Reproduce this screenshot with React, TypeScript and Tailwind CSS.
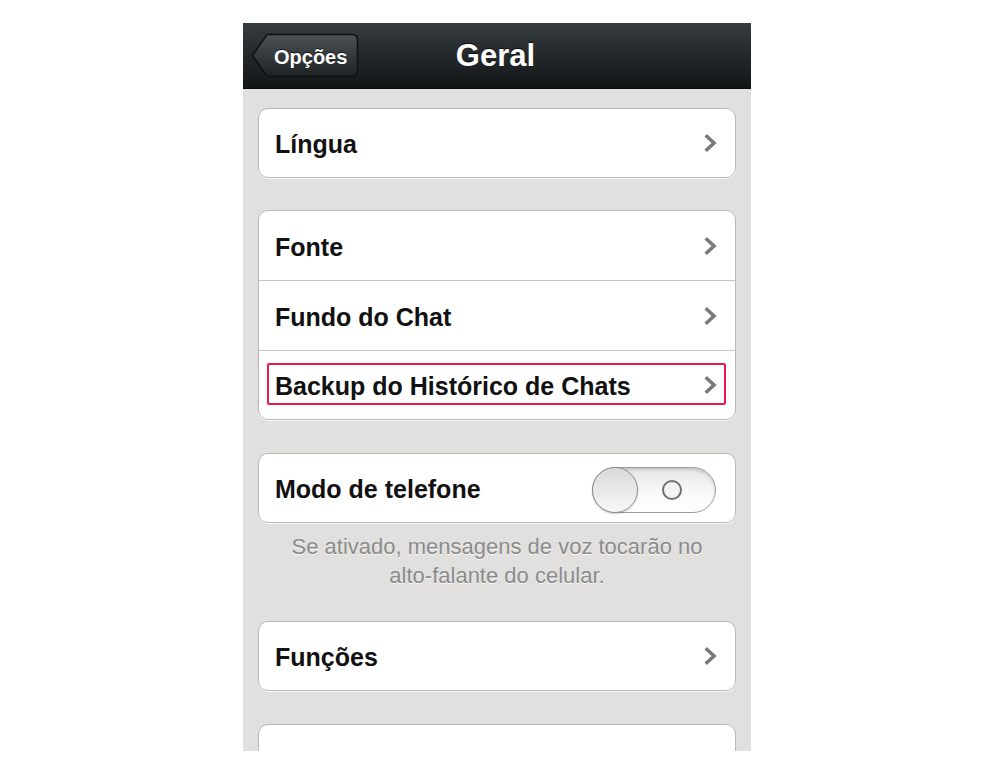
import React from 'react';

const Chevron = () => (
  <svg width="14" height="20" viewBox="0 0 14 20" className="shrink-0">
    <path d="M3 3.5 L10 10 L3 16.5" fill="none" stroke="#7a7a7a" strokeWidth="3.6" strokeLinecap="square" strokeLinejoin="miter" />
  </svg>
);

const Row: React.FC<{ label: string; last?: boolean; highlight?: boolean }> = ({ label, last, highlight }) => (
  <div className={`relative flex items-center justify-between pl-[16px] pr-[17px] ${last ? 'h-[68px]' : 'h-[70px] border-b border-[#c6c6c4]'}`}>
    <span className="pt-[4px] text-[25px] font-bold text-[#111]">{label}</span>
    <Chevron />
    {highlight && (
      <div className="absolute left-[8px] right-[9px] top-[12px] bottom-[14px] border-2 border-[#e8194b] rounded-[2px]" />
    )}
  </div>
);

const Card: React.FC<{ children?: React.ReactNode; className?: string }> = ({ children, className }) => (
  <div className={`rounded-[10px] border border-[#b9b8b5] bg-white overflow-hidden shadow-[0_1px_0_rgba(255,255,255,0.8)] ${className ?? ''}`}>
    {children}
  </div>
);

const Toggle = () => (
  <div className="relative mt-[4px] flex h-[46px] w-[124px] items-center rounded-full border border-[#9d9d9d] bg-gradient-to-b from-[#e6e6e6] via-[#f7f7f7] to-[#ffffff] shadow-[inset_0_2px_3px_rgba(0,0,0,0.15)]">
    <div className="h-[46px] w-[46px] -ml-px rounded-full border border-[#8e8e8e] bg-gradient-to-b from-[#d9d9d9] to-[#f8f8f8] shadow-[0_1px_2px_rgba(0,0,0,0.2)]" />
    <div className="ml-[24px] h-[20px] w-[20px] rounded-full border-[2.5px] border-[#6f6f6f] bg-[#f4f4f4]" />
  </div>
);

export default function App() {
  return (
    <div className="min-h-[762px] w-full bg-white font-['Liberation_Sans',Arial,sans-serif]">
      <div className="pt-[23px] pl-[243px]">
        <div className="flex h-[728px] w-[508px] flex-col overflow-hidden bg-[#e1e0de]">
          {/* nav bar */}
          <div className="relative flex h-[66px] shrink-0 items-center justify-center border-b border-[#0b0c0d] bg-gradient-to-b from-[#363c3f] via-[#23282b] to-[#131617]">
            <div className="absolute left-[8px] top-[10px] flex h-[45px] w-[108px] items-center">
              <svg width="108" height="45" viewBox="0 0 108 45" className="absolute left-0 top-0">
                <defs>
                  <linearGradient id="bk" x1="0" y1="0" x2="0" y2="1">
                    <stop offset="0" stopColor="#4b5256" />
                    <stop offset="1" stopColor="#1d2124" />
                  </linearGradient>
                </defs>
                <path d="M16 1.5 H101 Q106.5 1.5 106.5 7 V38 Q106.5 43.5 101 43.5 H16 L1.5 22.5 Z" fill="url(#bk)" stroke="#0e1011" strokeWidth="1.5" />
              </svg>
              <span className="relative ml-[23px] pt-[2px] text-[20px] font-bold text-white [text-shadow:0_-1px_0_rgba(0,0,0,0.6)]">Opções</span>
            </div>
            <span className="ml-[-3px] pt-[2px] text-[31px] font-bold text-white [text-shadow:0_-1px_0_rgba(0,0,0,0.7)]">Geral</span>
          </div>

          {/* content */}
          <div className="flex flex-col px-[15px] pt-[19px]">
            <Card>
              <Row label="Língua" last />
            </Card>
            <div className="h-[32px]" />
            <Card>
              <Row label="Fonte" />
              <Row label="Fundo do Chat" />
              <Row label="Backup do Histórico de Chats" last highlight />
            </Card>
            <div className="h-[33px]" />
            <Card>
              <div className="flex h-[68px] items-center justify-between pl-[16px] pr-[19px]">
                <span className="pt-[4px] text-[25px] font-bold text-[#111]">Modo de telefone</span>
                <Toggle />
              </div>
            </Card>
            <p className="mt-[9px] text-center text-[22px] leading-[29px] text-[#8b8b8b] [text-shadow:0_1px_0_rgba(255,255,255,0.8)]">
              Se ativado, mensagens de voz tocarão no
              <br />
              alto-falante do celular.
            </p>
            <div className="h-[31px]" />
            <Card>
              <Row label="Funções" last />
            </Card>
            <div className="h-[33px]" />
            <Card className="h-[68px]" />
          </div>
        </div>
      </div>
    </div>
  );
}
